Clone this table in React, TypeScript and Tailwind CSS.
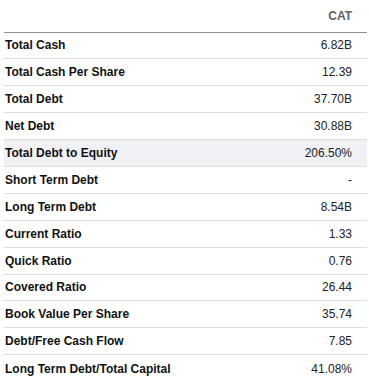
const rows: { label: string; value: string; highlight?: boolean }[] = [
  { label: "Total Cash", value: "6.82B" },
  { label: "Total Cash Per Share", value: "12.39" },
  { label: "Total Debt", value: "37.70B" },
  { label: "Net Debt", value: "30.88B" },
  { label: "Total Debt to Equity", value: "206.50%", highlight: true },
  { label: "Short Term Debt", value: "-" },
  { label: "Long Term Debt", value: "8.54B" },
  { label: "Current Ratio", value: "1.33" },
  { label: "Quick Ratio", value: "0.76" },
  { label: "Covered Ratio", value: "26.44" },
  { label: "Book Value Per Share", value: "35.74" },
  { label: "Debt/Free Cash Flow", value: "7.85" },
  { label: "Long Term Debt/Total Capital", value: "41.08%" },
];

export default function App() {
  return (
    <div className="w-[369px] h-[390px] overflow-hidden bg-white pl-[4px] pr-[2px] font-['Liberation_Sans',Arial,sans-serif] text-[12px]">
      {/* header */}
      <div className="flex h-[32.5px] items-center justify-end border-b-[1.5px] border-[#8c9094] pr-[15px] pt-[1px]">
        <span className="font-bold text-[#5b6168]">CAT</span>
      </div>

      {rows.map((r, i) => (
        <div
          key={r.label}
          className={`flex h-[26.9px] items-center justify-between pl-[1px] pr-[15px] ${
            i < rows.length - 1 ? "border-b border-[#dcdcdc]" : ""
          } ${r.highlight ? "bg-[#f0f1f5]" : ""}`}
        >
          <span className="font-bold text-[#111]">{r.label}</span>
          <span className="text-[#222]">{r.value}</span>
        </div>
      ))}
    </div>
  );
}
